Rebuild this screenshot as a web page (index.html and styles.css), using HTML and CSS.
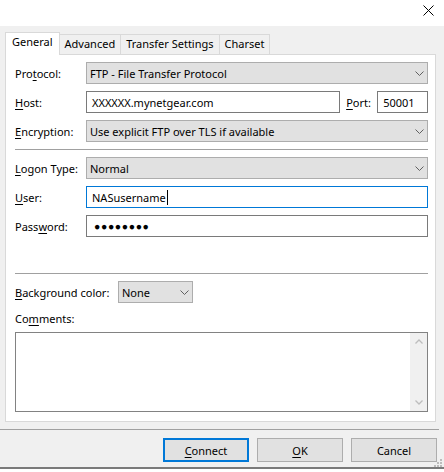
FILE: index.html
```html
<!DOCTYPE html>
<html lang="en">
<head>
<meta charset="utf-8">
<title>Site Manager - General</title>
<link rel="stylesheet" href="styles.css">
</head>
<body>
<div class="titlebar">
  <svg class="close" width="11" height="11" viewBox="0 0 11 11"><path d="M0.5 0.5 L10.5 10.5 M10.5 0.5 L0.5 10.5" stroke="#000" stroke-width="1" fill="none"/></svg>
</div>
<div class="dialog">
  <div class="tabs">
    <div class="tab active">General</div>
    <div class="tab">Advanced</div>
    <div class="tab">Transfer Settings</div>
    <div class="tab">Charset</div>
  </div>
  <div class="panel">
    <div class="form">
      <div class="row">
        <span class="lbl">Pro<u>t</u>ocol:</span>
        <div class="select grow"><span>FTP - File Transfer Protocol</span><svg class="chev" width="9" height="5" viewBox="0 0 9 5"><path d="M0.5 0.5 L4.5 4.5 L8.5 0.5" stroke="#606060" fill="none"/></svg></div>
      </div>
      <div class="row">
        <span class="lbl"><u>H</u>ost:</span>
        <div class="input host">XXXXXX.mynetgear.com</div>
        <span class="port-lbl"><u>P</u>ort:</span>
        <div class="input port">50001</div>
      </div>
      <div class="row">
        <span class="lbl"><u>E</u>ncryption:</span>
        <div class="select grow"><span>Use explicit FTP over TLS if available</span><svg class="chev" width="9" height="5" viewBox="0 0 9 5"><path d="M0.5 0.5 L4.5 4.5 L8.5 0.5" stroke="#606060" fill="none"/></svg></div>
      </div>
      <div class="sep"></div>
      <div class="row">
        <span class="lbl"><u>L</u>ogon Type:</span>
        <div class="select grow"><span>Normal</span><svg class="chev" width="9" height="5" viewBox="0 0 9 5"><path d="M0.5 0.5 L4.5 4.5 L8.5 0.5" stroke="#606060" fill="none"/></svg></div>
      </div>
      <div class="row">
        <span class="lbl"><u>U</u>ser:</span>
        <div class="input grow focused">NASusername<span class="caret"></span></div>
      </div>
      <div class="row">
        <span class="lbl">Pass<u>w</u>ord:</span>
        <div class="input grow dots">●●●●●●●●</div>
      </div>
      <div class="sep spaced"></div>
      <div class="row">
        <span class="lbl-bg"><u>B</u>ackground color:</span>
        <div class="select small"><span>None</span><svg class="chev" width="9" height="5" viewBox="0 0 9 5"><path d="M0.5 0.5 L4.5 4.5 L8.5 0.5" stroke="#606060" fill="none"/></svg></div>
      </div>
      <div class="comments-lbl">Co<u>m</u>ments:</div>
      <div class="comments">
        <div class="scrollbar">
          <div class="sb-btn"><svg width="8" height="5" viewBox="0 0 8 5"><path d="M0.5 4.5 L4 1 L7.5 4.5" stroke="#bdbdbd" stroke-width="1.3" fill="none"/></svg></div>
          <div class="sb-btn"><svg width="8" height="5" viewBox="0 0 8 5"><path d="M0.5 0.5 L4 4 L7.5 0.5" stroke="#bdbdbd" stroke-width="1.3" fill="none"/></svg></div>
        </div>
      </div>
    </div>
  </div>
  <div class="footsep"></div>
  <div class="buttons">
    <div class="btn default"><span><u>C</u>onnect</span></div>
    <div class="btn"><span><u>O</u>K</span></div>
    <div class="btn"><span>Cancel</span></div>
  </div>
</div>
<svg class="grip" width="10" height="10" viewBox="0 0 10 10">
  <rect x="6" y="0" width="2" height="2" fill="#bcbcbc"/>
  <rect x="3" y="3" width="2" height="2" fill="#bcbcbc"/>
  <rect x="6" y="3" width="2" height="2" fill="#bcbcbc"/>
  <rect x="0" y="6" width="2" height="2" fill="#bcbcbc"/>
  <rect x="3" y="6" width="2" height="2" fill="#bcbcbc"/>
  <rect x="6" y="6" width="2" height="2" fill="#bcbcbc"/>
</svg>
</body>
</html>
```
FILE: styles.css
```css
* { box-sizing: border-box; }
html, body { margin: 0; padding: 0; background: #fff; }
body {
  width: 444px;
  height: 472px;
  overflow: hidden;
  position: relative;
  font-family: "Noto Sans", "Open Sans", sans-serif;
  font-size: 11px;
  color: #000;
}
u { text-decoration: underline; text-underline-offset: 2px; text-decoration-thickness: 1px; }

.titlebar {
  height: 26px;
  display: flex;
  justify-content: flex-end;
  align-items: flex-start;
  padding: 5px 10px 0 0;
}
.close { display: block; }

.dialog {
  background: #f0f0f0;
  padding: 6px 0 5px;
  border-bottom: 2px solid #7a7a7a;
}

.tabs {
  display: flex;
  align-items: flex-end;
  height: 22px;
  padding-left: 5px;
}
.tab {
  height: 20px;
  padding: 0 5px;
  margin-left: -1px;
  border: 1px solid #d9d9d9;
  border-bottom: none;
  background: #f0f0f0;
  line-height: 18px;
  white-space: nowrap;
}
.tab.active {
  margin-left: 0;
  height: 23px;
  margin-bottom: -1px;
  padding: 0 6px;
  background: #fff;
  position: relative;
  z-index: 1;
}

.panel {
  width: 431px;
  margin-left: 5px;
  background: #fff;
  border: 1px solid #d9d9d9;
  padding: 7px 7px 9px 9px;
}
.form {
  display: flex;
  flex-direction: column;
  gap: 7px;
}
.row {
  display: flex;
  align-items: center;
  height: 22px;
}
.lbl { width: 71px; flex: none; white-space: nowrap; }
.lbl-bg { width: 103px; flex: none; white-space: nowrap; }

.select {
  height: 22px;
  background: #e1e1e1;
  border: 1px solid #adadad;
  display: flex;
  align-items: center;
  justify-content: space-between;
  padding: 0 3px 0 3px;
  white-space: nowrap;
}
.chev { display: block; flex: none; }
.grow { flex: 1; }
.select.small { width: 75px; }

.input {
  height: 22px;
  background: #fff;
  border: 1px solid #7a7a7a;
  display: flex;
  align-items: center;
  padding-left: 5px;
  white-space: nowrap;
}
.input.focused { border-color: #0078d7; }
.host { width: 255px; }
.port-lbl { width: 31px; margin-left: 6px; flex: none; }
.port { width: 51px; }
.dots { letter-spacing: 0.6px; font-size: 10.5px; padding-left: 7px; }
.caret {
  display: inline-block;
  width: 1px;
  height: 15px;
  background: #000;
  margin-left: 1px;
}

.sep { height: 1px; background: #a0a0a0; }
.sep.spaced { margin-top: 29px; }

.comments-lbl { height: 15px; line-height: 17px; }
.comments {
  height: 80px;
  border: 1px solid #828282;
  display: flex;
  justify-content: flex-end;
}
.scrollbar {
  width: 17px;
  background: #f0f0f0;
  display: flex;
  flex-direction: column;
  justify-content: space-between;
}
.sb-btn {
  height: 17px;
  display: flex;
  align-items: center;
  justify-content: center;
}
.sb-btn svg { display: block; }

.footsep {
  width: 439px;
  height: 1px;
  margin-top: 7px;
  background: #a0a0a0;
}
.buttons {
  display: flex;
  justify-content: flex-end;
  gap: 8px;
  padding-right: 7px;
  margin-top: 8px;
}
.btn {
  width: 86px;
  height: 24px;
  background: #e1e1e1;
  border: 1px solid #adadad;
  display: flex;
  align-items: center;
  justify-content: center;
}
.btn.default { border: 2px solid #0078d7; }

.grip {
  position: absolute;
  left: 434px;
  top: 459px;
  display: block;
}
```
